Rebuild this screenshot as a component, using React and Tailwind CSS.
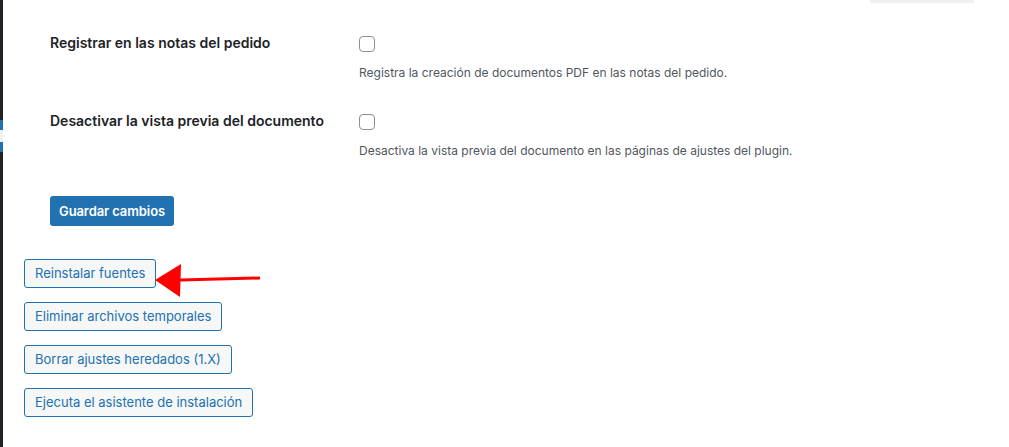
import React from "react";

const settings = [
  {
    label: "Registrar en las notas del pedido",
    desc: "Registra la creación de documentos PDF en las notas del pedido.",
  },
  {
    label: "Desactivar la vista previa del documento",
    desc: "Desactiva la vista previa del documento en las páginas de ajustes del plugin.",
  },
];

const tools = [
  "Reinstalar fuentes",
  "Eliminar archivos temporales",
  "Borrar ajustes heredados (1.X)",
  "Ejecuta el asistente de instalación",
];

const App = () => {
  return (
    <div
      className="relative flex w-[1009px] h-[447px] overflow-hidden bg-white text-[#1d2327]"
      style={{ fontFamily: "Inter, 'Noto Sans', sans-serif" }}
    >
      {/* Admin menu edge */}
      <div className="flex flex-col w-[3px] shrink-0 bg-[#1d2327]">
        <div className="h-[120px]"></div>
        <div className="h-[10px] bg-[#2271b1]"></div>
        <div className="h-[12px] bg-[#f0f0f1]"></div>
        <div className="h-[10px] bg-[#2271b1]"></div>
      </div>

      <main className="flex flex-col flex-1">
        {/* Cut-off element above */}
        <div className="flex h-[3px]">
          <div className="ml-[867px] w-[104px] bg-[#f0f0f1]"></div>
        </div>

        {/* Settings table */}
        <div className="flex flex-col gap-[29px] pl-[47px] pt-[30px]">
          {settings.map((s) => (
            <div key={s.label} className="flex">
              <div className="w-[309px] shrink-0 text-[14px] leading-[20px] font-semibold">
                {s.label}
              </div>
              <div className="flex flex-col">
                <div className="mt-[3px] w-4 h-4 rounded-[4px] border border-[#8c8f94] bg-white"></div>
                <p className="mt-[12px] text-[12px] leading-[18px] text-[#50575e]">{s.desc}</p>
              </div>
            </div>
          ))}
        </div>

        <div className="pl-[47px] mt-[36px]">
          <button className="h-[30px] px-[9px] rounded-[3px] bg-[#2271b1] text-white text-[13px] font-semibold leading-[28px] tracking-[-0.1px]">
            Guardar cambios
          </button>
        </div>

        {/* Tools */}
        <div className="flex flex-col items-start gap-[14px] pl-[21px] mt-[33px]">
          {tools.map((t) => (
            <button
              key={t}
              className="h-[29px] px-[10px] rounded-[3px] border border-[#2271b1] bg-[#f6f7f7] text-[#2271b1] text-[13px] leading-[27px]"
            >
              {t}
            </button>
          ))}
        </div>
      </main>

      {/* Annotation arrow */}
      <svg
        className="absolute left-[150px] top-[260px]"
        width="115"
        height="40"
        viewBox="0 0 115 40"
      >
        <path d="M110 16.5 L30 18.5 L30 21.5 L110 19.5 Z" fill="#ff0000" />
        <polygon points="5,20 31,4 30,37" fill="#ff0000" />
      </svg>
    </div>
  );
};

export default App;
